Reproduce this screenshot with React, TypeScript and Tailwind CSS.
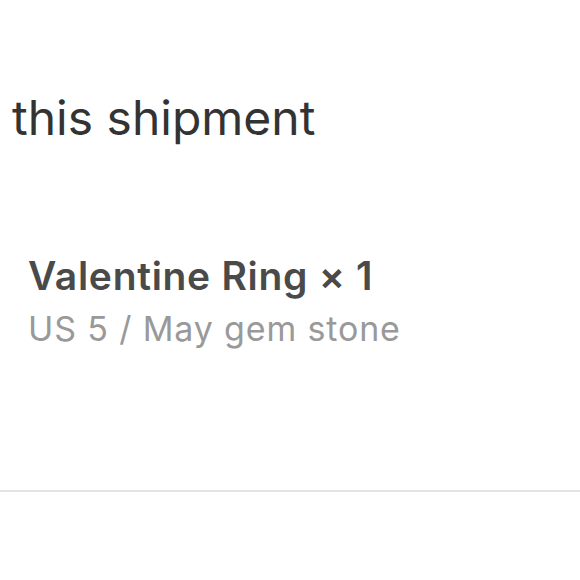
export default function App() {
  return (
    <div className="w-[580px] h-[580px] bg-white overflow-hidden font-['Inter',sans-serif]">
      <div className="pt-[88px] pl-[12px]">
        <h1 className="text-[48px] leading-[60px] text-[#333333] font-normal">
          this shipment
        </h1>
      </div>
      <div className="pt-[101px] pl-[28px]">
        <p className="text-[39px] leading-[54px] font-semibold text-[#4a4a4a] tracking-[0.7px]">
          Valentine Ring × 1
        </p>
        <p className="text-[34px] leading-[52px] text-[#999999] tracking-[0.85px]">
          US 5 / May gem stone
        </p>
      </div>
      <div className="mt-[135px] h-[2px] bg-[#e3e3e3]" />
    </div>
  );
}
